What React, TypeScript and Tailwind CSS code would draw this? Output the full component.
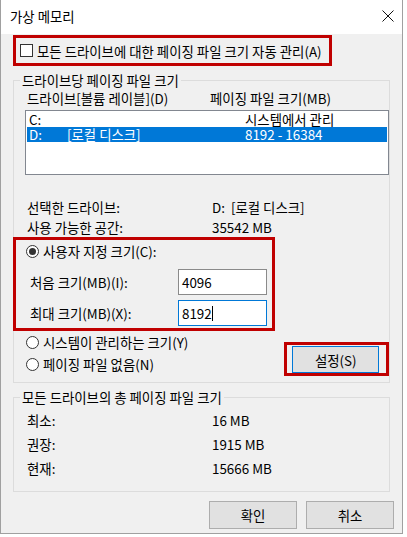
import React from "react";

function Radio({ checked }: { checked?: boolean }) {
  return (
    <span className="w-[13px] h-[13px] rounded-full border border-[#333333] bg-white flex items-center justify-center shrink-0">
      {checked && <span className="w-[7px] h-[7px] rounded-full bg-[#333333]" />}
    </span>
  );
}

function Btn({ children, def }: { children: React.ReactNode; def?: boolean }) {
  return (
    <div
      className={
        def
          ? "w-[87px] h-[27px] border border-[#0078d7] bg-[#e1e1e1] flex items-center justify-center"
          : "w-[88px] h-[28px] border border-[#adadad] bg-[#e1e1e1] flex items-center justify-center"
      }
    >
      {children}
    </div>
  );
}

export default function App() {
  return (
    <div className="w-[407px] h-[537px] bg-white font-['Noto_Sans_CJK_KR','Noto_Sans',sans-serif] text-[13.4px] leading-[16px] text-black">
      <div className="w-[403px] h-[534px] border-x border-b border-[#a0a0a0] flex flex-col">
        {/* title bar */}
        <div className="h-[34px] shrink-0 bg-white flex items-center justify-between pl-[9px] pr-[8px]">
          <span className="pb-[2px]">가상 메모리</span>
          <svg width="12" height="12" viewBox="0 0 12 12" className="mb-[2px]">
            <path d="M0.5 0.5 L11.5 11.5 M11.5 0.5 L0.5 11.5" stroke="#111" strokeWidth="1" fill="none" />
          </svg>
        </div>

        {/* body */}
        <div className="flex-1 bg-[#f0f0f0] pt-[1px] flex flex-col">
          {/* auto manage checkbox (red box) */}
          <div className="ml-[12px] w-[319px] h-[31px] border-[3px] border-[#c00000] flex items-center pl-[4px] gap-[4px]">
            <span className="w-[13px] h-[13px] border border-[#333333] bg-white shrink-0" />
            <span className="whitespace-nowrap">모든 드라이브에 대한 페이징 파일 크기 자동 관리(A)</span>
          </div>

          {/* group 1 */}
          <fieldset className="ml-[12px] mt-[6px] w-[377px] min-w-0 border border-[#dcdcdc] pb-[6px]">
            <legend className="ml-[6px] px-[2px] leading-[16px]">드라이브당 페이징 파일 크기</legend>

            <div className="mt-[2px] flex pl-[13px] h-[16px] whitespace-nowrap">
              <span className="w-[183px]">드라이브[볼륨 레이블](D)</span>
              <span>페이징 파일 크기(MB)</span>
            </div>

            <div className="ml-[11px] mt-[4px] w-[364px] h-[65px] border border-[#828790] bg-white px-[1px] flex flex-col whitespace-nowrap">
              <div className="h-[16px] leading-[16px] flex items-center pl-[2px]">
                <span className="w-[38px]">C:</span>
                <span className="w-[178px]"></span>
                <span>시스템에서 관리</span>
              </div>
              <div className="h-[15px] leading-[15px] flex items-center pl-[2px] bg-[#0078d7] text-white">
                <span className="w-[38px]">D:</span>
                <span className="w-[178px]">[로컬 디스크]</span>
                <span>8192 - 16384</span>
              </div>
            </div>

            <div className="mt-[22px] flex flex-col whitespace-nowrap">
              <div className="h-[20px] flex items-center pl-[13px]">
                <span className="w-[185px]">선택한 드라이브:</span>
                <span>D:&nbsp;&nbsp;[로컬 디스크]</span>
              </div>
              <div className="h-[20px] flex items-center pl-[13px]">
                <span className="w-[185px]">사용 가능한 공간:</span>
                <span>35542 MB</span>
              </div>
            </div>

            {/* custom size (red box) */}
            <div className="-ml-[1px] w-[262px] h-[94px] border-[3px] border-[#c00000] flex flex-col whitespace-nowrap">
              <div className="h-[22px] flex items-center pl-[10px] gap-[4px]">
                <Radio checked />
                <span>사용자 지정 크기(C):</span>
              </div>
              <div className="mt-[7px] h-[26px] flex items-center justify-between pl-[14px] pr-[5px]">
                <span>처음 크기(MB)(I):</span>
                <div className="w-[89px] h-[26px] border border-[#8a8a8a] bg-white flex items-center pl-[3px]">4096</div>
              </div>
              <div className="mt-[5px] h-[26px] flex items-center justify-between pl-[14px] pr-[5px]">
                <span>최대 크기(MB)(X):</span>
                <div className="w-[89px] h-[26px] border border-[#0078d7] bg-white flex items-center pl-[3px]">
                  <span>8192</span>
                  <span className="w-[1px] h-[15px] bg-black" />
                </div>
              </div>
            </div>

            <div className="flex whitespace-nowrap">
              <div className="w-[271px] flex flex-col">
                <div className="h-[22px] flex items-center pl-[12px] gap-[4px]">
                  <Radio />
                  <span>시스템이 관리하는 크기(Y)</span>
                </div>
                <div className="h-[22px] flex items-center pl-[12px] gap-[4px]">
                  <Radio />
                  <span>페이징 파일 없음(N)</span>
                </div>
              </div>
              <div className="mt-[11px] w-[105px] h-[34px] border-[3px] border-[#c00000] pl-[5px] pt-[1px]">
                <Btn def>설정(S)</Btn>
              </div>
            </div>
          </fieldset>

          {/* group 2 */}
          <fieldset className="ml-[12px] mt-[6px] w-[377px] min-w-0 border border-[#dcdcdc] pb-[11px]">
            <legend className="ml-[6px] px-[2px] leading-[16px]">모든 드라이브의 총 페이징 파일 크기</legend>
            <div className="mt-[3px] flex flex-col whitespace-nowrap">
              <div className="h-[24px] flex items-center pl-[13px]">
                <span className="w-[185px]">최소:</span>
                <span>16 MB</span>
              </div>
              <div className="h-[24px] flex items-center pl-[13px]">
                <span className="w-[185px]">권장:</span>
                <span>1915 MB</span>
              </div>
              <div className="h-[24px] flex items-center pl-[13px]">
                <span className="w-[185px]">현재:</span>
                <span>15666 MB</span>
              </div>
            </div>
          </fieldset>

          {/* bottom buttons */}
          <div className="mt-[9px] flex justify-end gap-[9px] pr-[8px]">
            <Btn>확인</Btn>
            <Btn>취소</Btn>
          </div>
        </div>
      </div>
    </div>
  );
}
